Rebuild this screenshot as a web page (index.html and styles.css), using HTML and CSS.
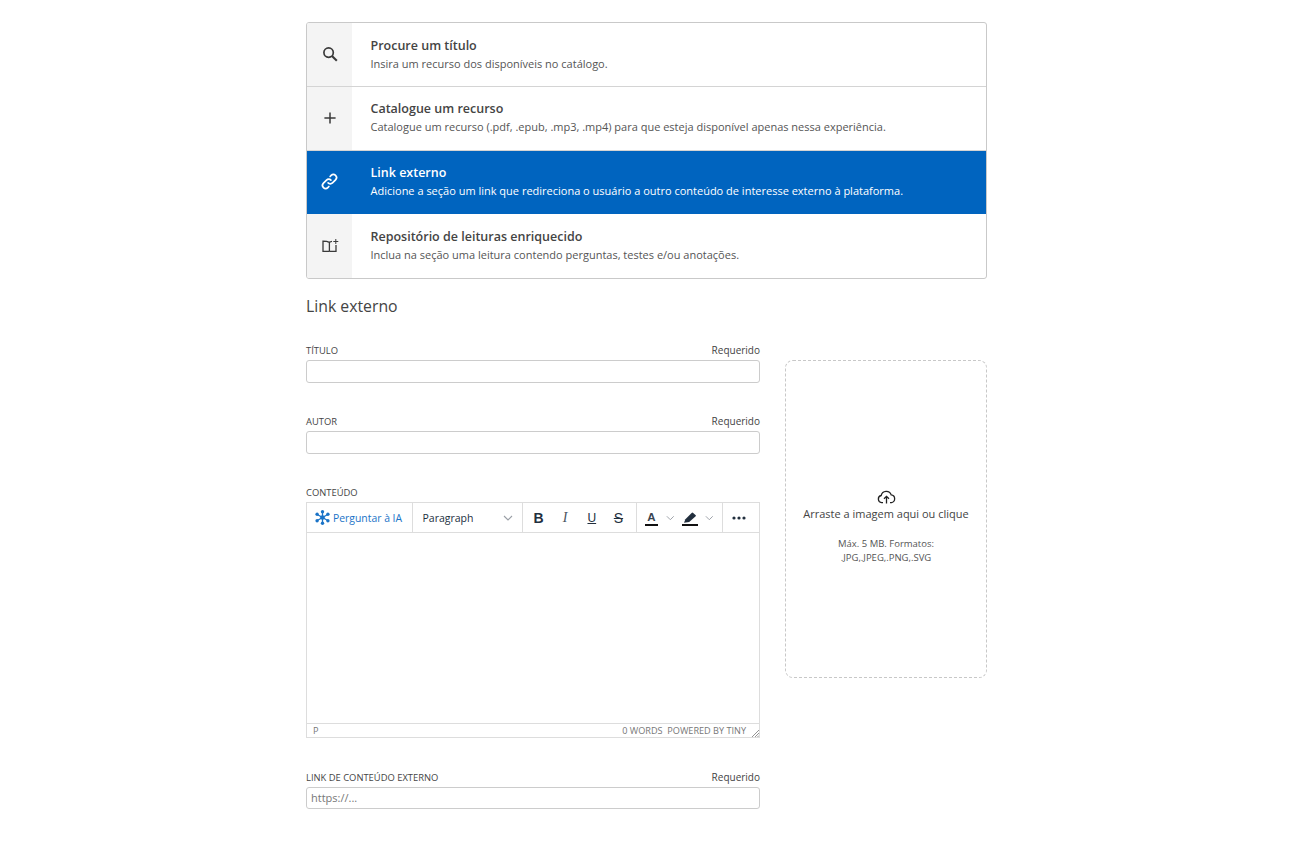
FILE: index.html
```html
<!DOCTYPE html>
<html lang="pt-BR">
<head>
    <meta charset="UTF-8">
    <meta name="viewport" content="width=device-width, initial-scale=1.0">
    <title>Link externo</title>
    <link rel="stylesheet" href="styles.css">
</head>
<body>
    <div class="container">
        <div class="options">
            <div class="option">
                <div class="option-icon">
                    <svg width="16" height="16" viewBox="0 0 16 16" fill="none" stroke="currentColor" stroke-width="1.7"><circle cx="6.6" cy="6.6" r="4.7"/><path d="M10 10l4.8 4.8" stroke-width="2.1"/></svg>
                </div>
                <div class="option-content">
                    <h2>Procure um título</h2>
                    <p>Insira um recurso dos disponíveis no catálogo.</p>
                </div>
            </div>
            <div class="option">
                <div class="option-icon">
                    <svg width="16" height="16" viewBox="0 0 16 16" fill="none" stroke="currentColor" stroke-width="1.5"><path d="M8 2.4v11.2M2.4 8h11.2"/></svg>
                </div>
                <div class="option-content">
                    <h2>Catalogue um recurso</h2>
                    <p>Catalogue um recurso (.pdf, .epub, .mp3, .mp4) para que esteja disponível apenas nessa experiência.</p>
                </div>
            </div>
            <div class="option active">
                <div class="option-icon">
                    <svg width="19" height="19" viewBox="0 0 16 16" fill="none" stroke="currentColor" stroke-width="1.4" stroke-linecap="round"><path d="M6.8 9.2a2.6 2.6 0 0 0 3.7 0l2.6-2.6a2.6 2.6 0 0 0-3.7-3.7l-.9.9"/><path d="M9.2 6.8a2.6 2.6 0 0 0-3.7 0l-2.6 2.6a2.6 2.6 0 0 0 3.7 3.7l.9-.9"/></svg>
                </div>
                <div class="option-content">
                    <h2>Link externo</h2>
                    <p>Adicione a seção um link que redireciona o usuário a outro conteúdo de interesse externo à plataforma.</p>
                </div>
            </div>
            <div class="option">
                <div class="option-icon">
                    <svg width="18" height="16" viewBox="0 0 18 16" fill="none" stroke="currentColor" stroke-width="1.3"><path d="M8.4 13.4V4.4C6.6 3.4 4 3.2 2 3.2v10.2h6.4"/><path d="M8.4 4.4c.8-.5 1.6-.8 2.6-1M8.4 13.4h6.6V7"/><path d="M14.8 1v5M12.3 3.5h5" stroke-width="1"/></svg>
                </div>
                <div class="option-content">
                    <h2>Repositório de leituras enriquecido</h2>
                    <p>Inclua na seção uma leitura contendo perguntas, testes e/ou anotações.</p>
                </div>
            </div>
        </div>

        <h1 class="section-title">Link externo</h1>

        <div class="form">
            <div class="fields">
                <div class="field">
                    <div class="field-label"><label>TÍTULO</label><span>Requerido</span></div>
                    <input type="text">
                </div>
                <div class="field">
                    <div class="field-label"><label>AUTOR</label><span>Requerido</span></div>
                    <input type="text">
                </div>
                <div class="field">
                    <div class="field-label"><label>CONTEÚDO</label></div>
                    <div class="editor">
                        <div class="toolbar">
                            <div class="tool-group ask-ai">
                                <svg width="15" height="15" viewBox="0 0 15 15" fill="none" stroke="#1a73c7" stroke-width="1.3" stroke-linecap="round"><path d="M7.5 1.5v12M2.3 4.5l10.4 6M12.7 4.5l-10.4 6"/><circle cx="7.5" cy="7.5" r="2.3" fill="#1a73c7" stroke="none"/><circle cx="7.5" cy="1.8" r="1.7" fill="#1a73c7" stroke="none"/><circle cx="7.5" cy="13.2" r="1.7" fill="#1a73c7" stroke="none"/><circle cx="2.1" cy="4.2" r="1.7" fill="#1a73c7" stroke="none"/><circle cx="12.9" cy="4.2" r="1.7" fill="#1a73c7" stroke="none"/><circle cx="2.1" cy="10.8" r="1.7" fill="#1a73c7" stroke="none"/><circle cx="12.9" cy="10.8" r="1.7" fill="#1a73c7" stroke="none"/></svg>
                                <span>Perguntar à IA</span>
                            </div>
                            <div class="tool-group paragraph">
                                <span>Paragraph</span>
                                <svg class="chevron" width="10" height="6" viewBox="0 0 10 6"><path d="M1 1l4 4 4-4"/></svg>
                            </div>
                            <div class="tool-group formats">
                                <span class="tool tool-b">B</span>
                                <span class="tool tool-i">I</span>
                                <span class="tool tool-u">U</span>
                                <span class="tool tool-s">S</span>
                            </div>
                            <div class="tool-group colors">
                                <span class="tool-color"><span class="color-letter">A</span></span>
                                <svg class="chevron" width="10" height="6" viewBox="0 0 10 6"><path d="M1 1l4 4 4-4"/></svg>
                                <span class="tool-color">
                                    <svg width="16" height="12" viewBox="0 0 16 12"><path d="M2 10.8l1.4-3.6L9.6 1l1-.6 3.4 3-.6 1-6.2 5.6-5.2.8z" fill="#222f3e"/></svg>
                                </span>
                                <svg class="chevron" width="10" height="6" viewBox="0 0 10 6"><path d="M1 1l4 4 4-4"/></svg>
                            </div>
                            <div class="tool-group more">
                                <svg width="14" height="4" viewBox="0 0 14 4" fill="#222f3e"><circle cx="2" cy="2" r="1.6"/><circle cx="7" cy="2" r="1.6"/><circle cx="12" cy="2" r="1.6"/></svg>
                            </div>
                        </div>
                        <div class="editor-body"></div>
                        <div class="statusbar">
                            <span>P</span>
                            <span class="status-right"><span>0 WORDS&nbsp;&nbsp;POWERED BY TINY</span><svg width="8" height="8" viewBox="0 0 8 8" fill="none" stroke="#777" stroke-width="0.8"><path d="M1 8l7-7M4 8l4-4M6.5 8L8 6.5"/></svg></span>
                        </div>
                    </div>
                </div>
                <div class="field">
                    <div class="field-label"><label>LINK DE CONTEÚDO EXTERNO</label><span>Requerido</span></div>
                    <input type="text" placeholder="https://...">
                </div>
            </div>

            <div class="dropzone">
                <svg width="19" height="14" viewBox="0 0 19 14" fill="none" stroke="#222" stroke-width="1.3"><path d="M6 12.6H4.6a3.6 3.6 0 0 1-.4-7.1 5.2 5.2 0 0 1 10-.6 3.9 3.9 0 0 1 .3 7.7H13"/><path d="M9.5 13.5V6.5M7 8.8l2.5-2.5L12 8.8"/></svg>
                <p class="drop-title">Arraste a imagem aqui ou clique</p>
                <p class="drop-info">Máx. 5 MB. Formatos:<br>.JPG,.JPEG,.PNG,.SVG</p>
            </div>
        </div>
    </div>
</body>
</html>
```

FILE: styles.css
```css
body {
    font-family: 'Open Sans', sans-serif;
    margin: 0;
    padding: 22px 0 30px 306px;
    background-color: #fff;
    color: #333;
}
.container {
    width: 681px;
}
.options {
    border: 1px solid #c9c9c9;
    border-radius: 3px;
    overflow: hidden;
}
.option {
    display: flex;
    height: 63.75px;
    box-sizing: border-box;
    border-bottom: 1px solid #d4d4d4;
}
.option:last-child {
    border-bottom: none;
}
.option-icon {
    flex: 0 0 45px;
    display: flex;
    align-items: center;
    justify-content: center;
    background-color: #f4f4f4;
    color: #3a3a3a;
}
.option-content {
    padding: 13.5px 0 0 18.5px;
}
.option-content h2 {
    margin: 0;
    font-size: 12.5px;
    line-height: 17px;
    font-weight: 600;
    color: #444;
}
.option-content p {
    margin: 2px 0 0;
    font-size: 11px;
    line-height: 15px;
    color: #555;
}
.option.active {
    background-color: #0064bf;
    border-bottom-color: #0064bf;
}
.option.active .option-icon {
    background-color: #0064bf;
    color: #fff;
}
.option.active h2,
.option.active p {
    color: #fff;
}
.section-title {
    margin: 16px 0 0;
    font-size: 15.8px;
    line-height: 22px;
    font-weight: 400;
    color: #444;
}
.form {
    display: flex;
    gap: 25px;
    margin-top: 26px;
}
.fields {
    width: 454px;
    display: flex;
    flex-direction: column;
    gap: 31.5px;
}
.field-label {
    display: flex;
    justify-content: space-between;
    align-items: flex-end;
    height: 14px;
    margin-bottom: 3px;
    font-size: 9.4px;
    line-height: 13px;
    color: #444;
}
.field-label span {
    font-size: 10px;
    color: #444;
}
.field input {
    display: block;
    width: 100%;
    height: 22.5px;
    box-sizing: border-box;
    padding: 0 4px;
    border: 1px solid #ccc;
    border-radius: 3px;
    font-family: inherit;
    font-size: 11px;
    outline: none;
}
.field input::placeholder {
    color: #777;
}
.editor {
    border: 1px solid #ddd;
    height: 236px;
    box-sizing: border-box;
    display: flex;
    flex-direction: column;
}
.toolbar {
    display: flex;
    height: 30px;
    box-sizing: border-box;
    flex: none;
    border-bottom: 1px solid #ddd;
}
.tool-group {
    display: flex;
    align-items: center;
    border-right: 1px solid #ddd;
    font-size: 10.5px;
    color: #222f3e;
}
.tool-group:last-child {
    border-right: none;
}
.ask-ai {
    width: 105.5px;
    box-sizing: border-box;
    padding-left: 7.5px;
    gap: 3.5px;
    font-size: 10.4px;
    color: #1a73c7;
}
.paragraph {
    width: 110px;
    box-sizing: border-box;
    padding: 0 9px 0 10px;
    justify-content: space-between;
}
.formats {
    width: 114px;
    box-sizing: border-box;
    padding: 0 10px 0 9px;
    justify-content: space-between;
}
.chevron {
    fill: none;
    stroke: #9a9fa6;
    stroke-width: 1.1;
}
.tool {
    width: 14px;
    text-align: center;
    font-family: 'Liberation Sans', sans-serif;
    font-size: 14px;
    line-height: 16px;
    color: #222f3e;
}
.tool-b {
    font-weight: bold;
}
.tool-i {
    font-family: 'Liberation Serif', serif;
    font-style: italic;
    color: #4a5562;
}
.tool-u {
    font-size: 12px;
    text-decoration: underline;
}
.tool-s {
    text-decoration: line-through;
}
.colors {
    width: 86px;
    box-sizing: border-box;
    padding-left: 8px;
}
.tool-color {
    width: 16px;
    height: 15px;
    border-bottom: 2px solid #111;
    display: flex;
    justify-content: center;
    align-items: flex-end;
    margin-right: 7.5px;
}
.colors .chevron {
    margin-right: 7.5px;
}
.color-letter {
    font-family: 'Liberation Sans', sans-serif;
    font-size: 11.5px;
    line-height: 13px;
    font-weight: bold;
    color: #3a4450;
}
.more {
    flex: 1;
    justify-content: center;
    padding-right: 3px;
}
.editor-body {
    flex: 1;
}
.statusbar {
    flex: none;
    height: 13px;
    border-top: 1px solid #ddd;
    display: flex;
    justify-content: space-between;
    align-items: center;
    padding: 0 0 0 6px;
    font-size: 9.15px;
    line-height: 13px;
    color: #777;
}
.status-right {
    display: flex;
    align-items: flex-end;
    gap: 5px;
}
.dropzone {
    width: 202px;
    height: 318px;
    box-sizing: border-box;
    margin-top: 17px;
    border: 1px dashed #c8c8c8;
    border-radius: 8px;
    display: flex;
    flex-direction: column;
    align-items: center;
    padding-top: 129px;
    text-align: center;
}
.drop-title {
    margin: 2px 0 0;
    font-size: 11px;
    line-height: 15px;
    color: #444;
}
.drop-info {
    margin: 16px 0 0;
    font-size: 9.5px;
    line-height: 14px;
    color: #555;
}
```
